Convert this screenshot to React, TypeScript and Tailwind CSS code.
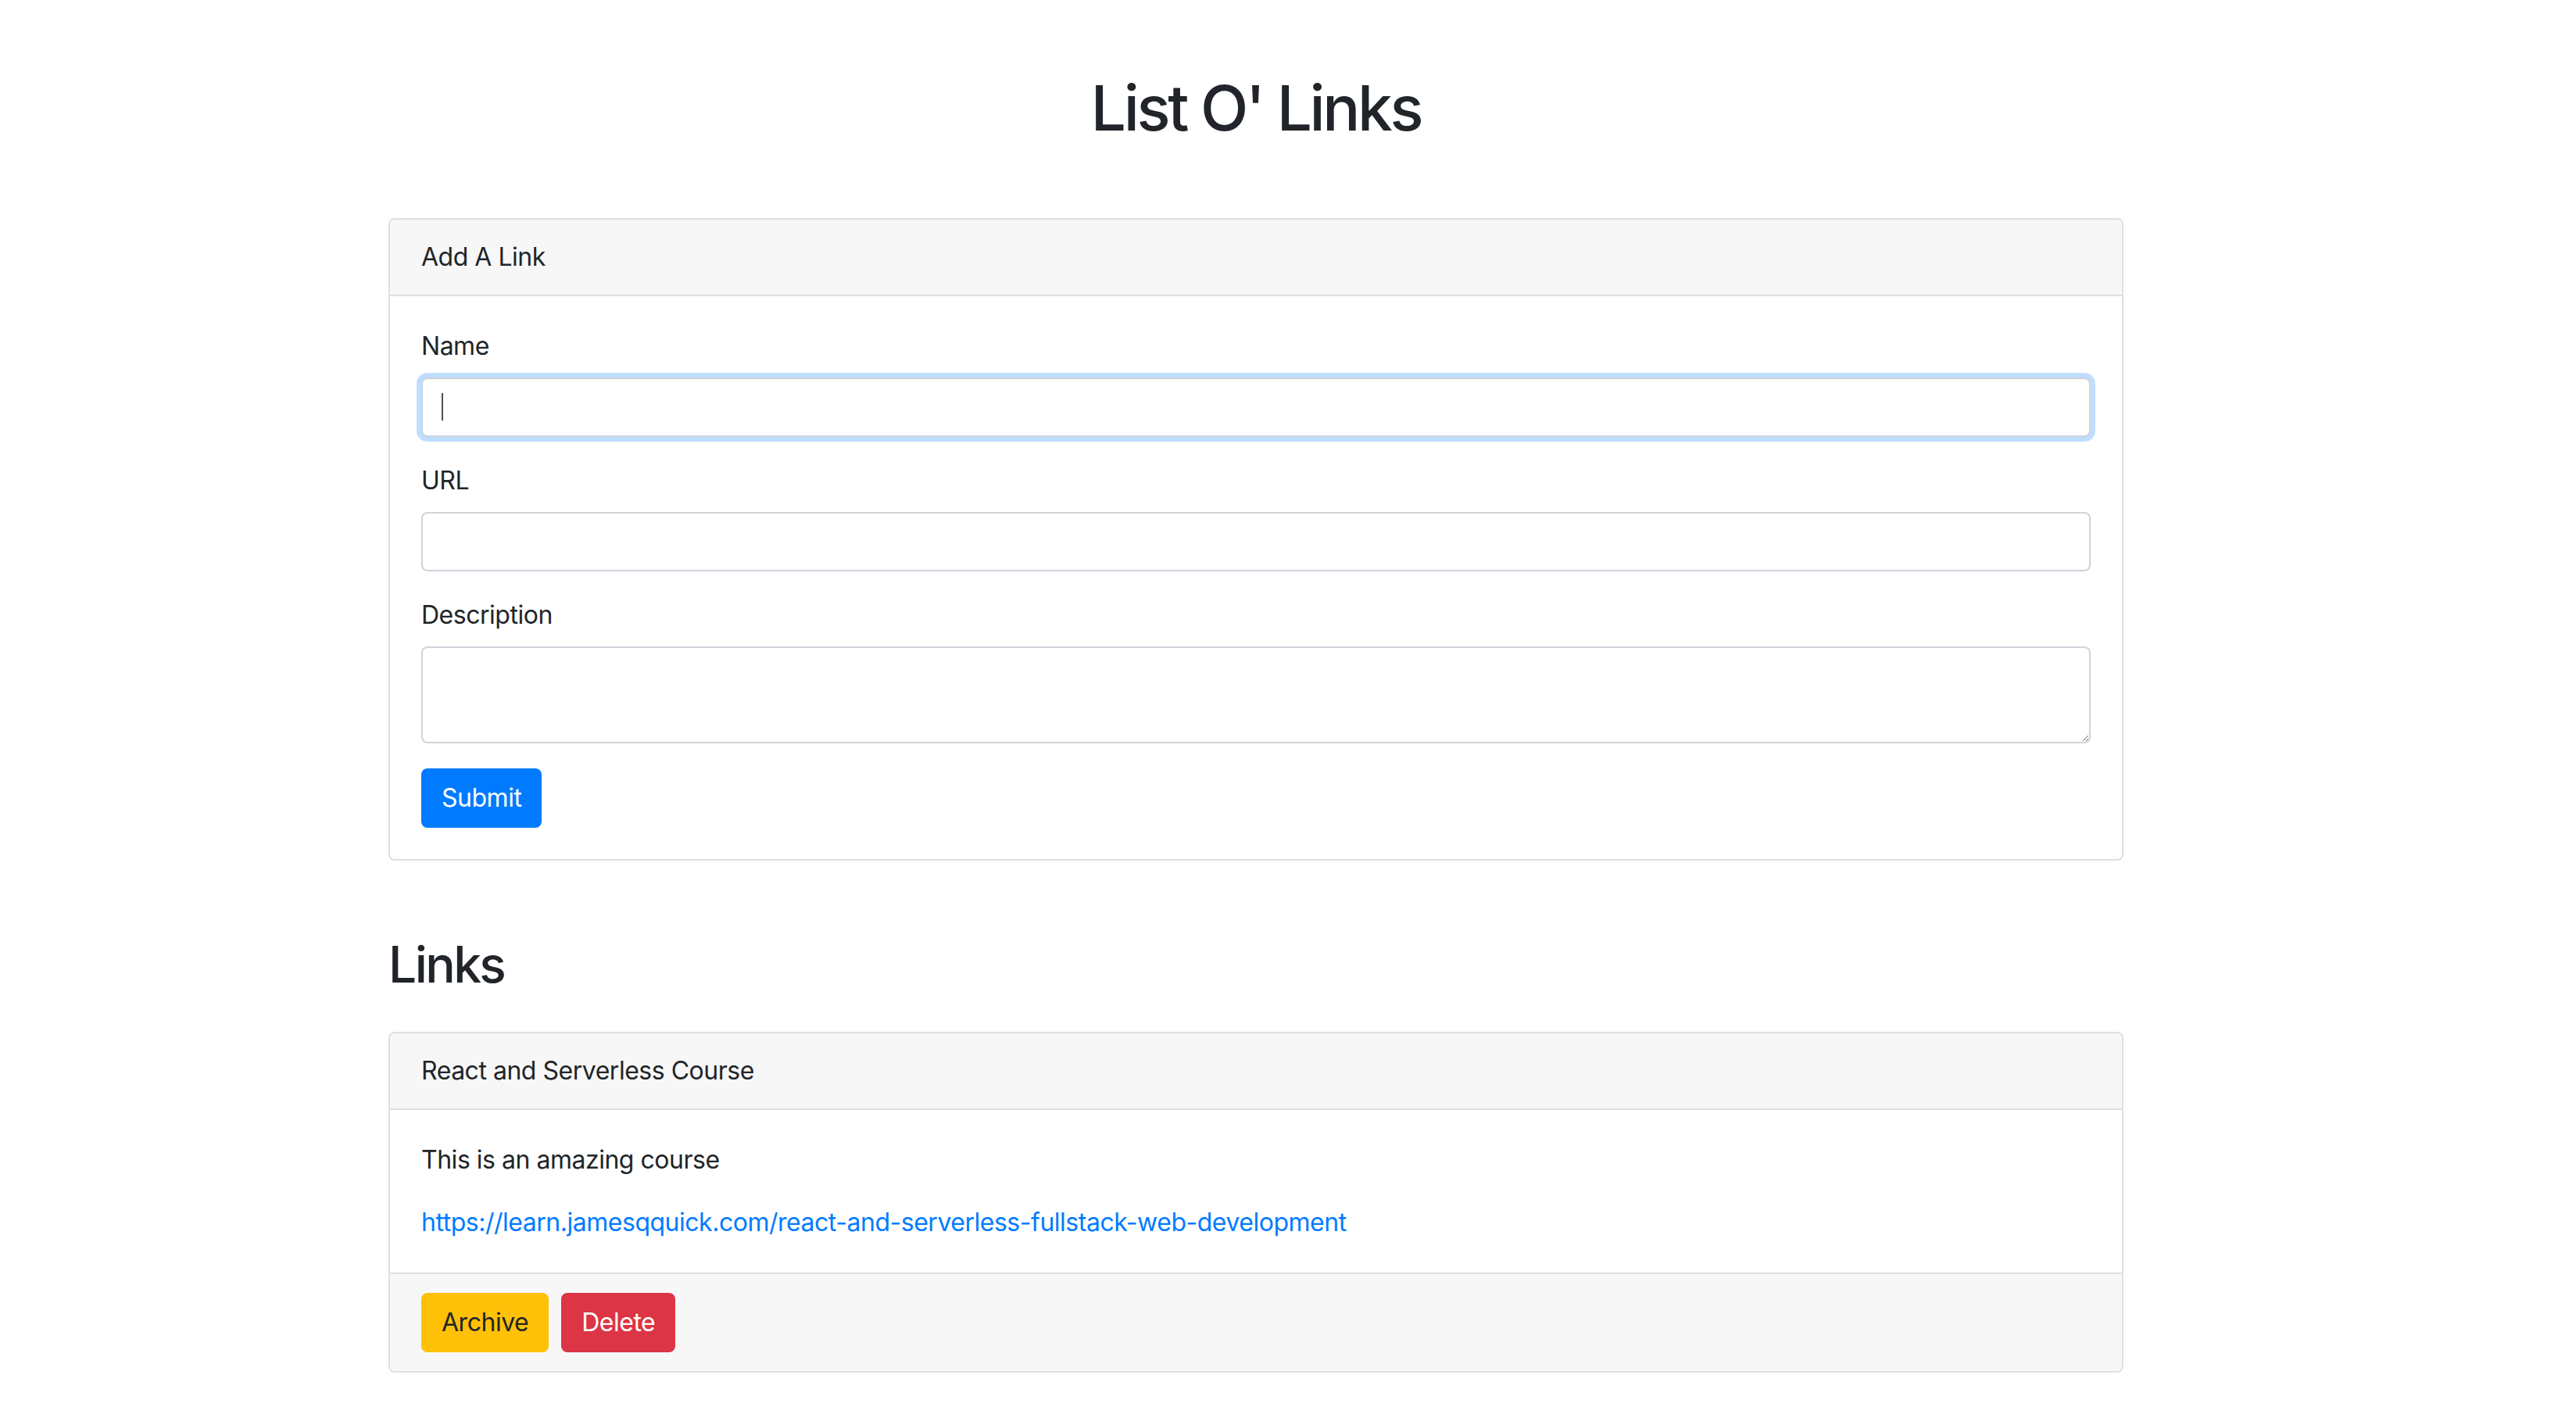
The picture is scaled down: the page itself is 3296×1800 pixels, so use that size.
import type { ReactNode } from "react";

const fieldClass =
  "block w-full rounded-[8px] border-2 border-[#ced4da] bg-white px-[24px] text-[32px] leading-[48px] text-[#495057] outline-none";

function Card({ title, children, footer }: { title: string; children: ReactNode; footer?: ReactNode }) {
  return (
    <div className="rounded-[8px] border-2 border-[#dfdfdf] bg-white">
      <div className="rounded-t-[6px] border-b-2 border-[#dfdfdf] bg-[#f7f7f7] px-[40px] py-[24px] text-[32px] leading-[48px]">
        {title}
      </div>
      <div className="p-[40px]">{children}</div>
      {footer && (
        <div className="flex gap-[16px] rounded-b-[6px] border-t-2 border-[#dfdfdf] bg-[#f7f7f7] px-[40px] py-[24px]">
          {footer}
        </div>
      )}
    </div>
  );
}

function Field({ label, children }: { label: string; children: ReactNode }) {
  return (
    <div className="mb-[32px]">
      <label className="mb-[16px] block text-[32px] leading-[48px]">{label}</label>
      {children}
    </div>
  );
}

export default function App() {
  return (
    <div className="min-h-screen bg-white font-[Inter,'Liberation_Sans',sans-serif] tracking-[-0.03em] text-[#212529]">
      <div className="ml-[497px] w-[2220px] pt-[90px] pb-[40px]">
        <h1 className="mb-[93px] text-center text-[80px] font-medium leading-[96px] tracking-[-0.042em]">
          List O' Links
        </h1>

        <Card title="Add A Link">
          <Field label="Name">
            <div className="relative">
              <input
                type="text"
                className={`${fieldClass} h-[76px] border-[#80bdff] shadow-[0_0_0_6px_rgba(0,123,255,0.25)]`}
              />
              <span className="pointer-events-none absolute top-[20px] left-[26px] h-[35px] w-[2px] bg-[#495057]" />
            </div>
          </Field>
          <Field label="URL">
            <input type="text" className={`${fieldClass} h-[76px]`} />
          </Field>
          <Field label="Description">
            <textarea rows={2} className={`${fieldClass} h-[124px] resize-y py-[12px]`} />
          </Field>
          <button className="h-[76px] rounded-[8px] border-2 border-[#007bff] bg-[#007bff] px-[24px] text-[32px] leading-[48px] text-white">
            Submit
          </button>
        </Card>

        <h2 className="mt-[94px] mb-[48px] text-[64px] font-medium leading-[77px] tracking-[-0.04em]">Links</h2>

        <Card
          title="React and Serverless Course"
          footer={
            <>
              <button className="h-[76px] rounded-[8px] border-2 border-[#ffc107] bg-[#ffc107] px-[24px] text-[32px] leading-[48px] text-[#212529]">
                Archive
              </button>
              <button className="h-[76px] rounded-[8px] border-2 border-[#dc3545] bg-[#dc3545] px-[24px] text-[32px] leading-[48px] text-white">
                Delete
              </button>
            </>
          }
        >
          <p className="mb-[32px] text-[32px] leading-[48px]">This is an amazing course</p>
          <a href="#" className="block text-[32px] leading-[48px] text-[#007bff]">
            https://learn.jamesqquick.com/react-and-serverless-fullstack-web-development
          </a>
        </Card>
      </div>
    </div>
  );
}
